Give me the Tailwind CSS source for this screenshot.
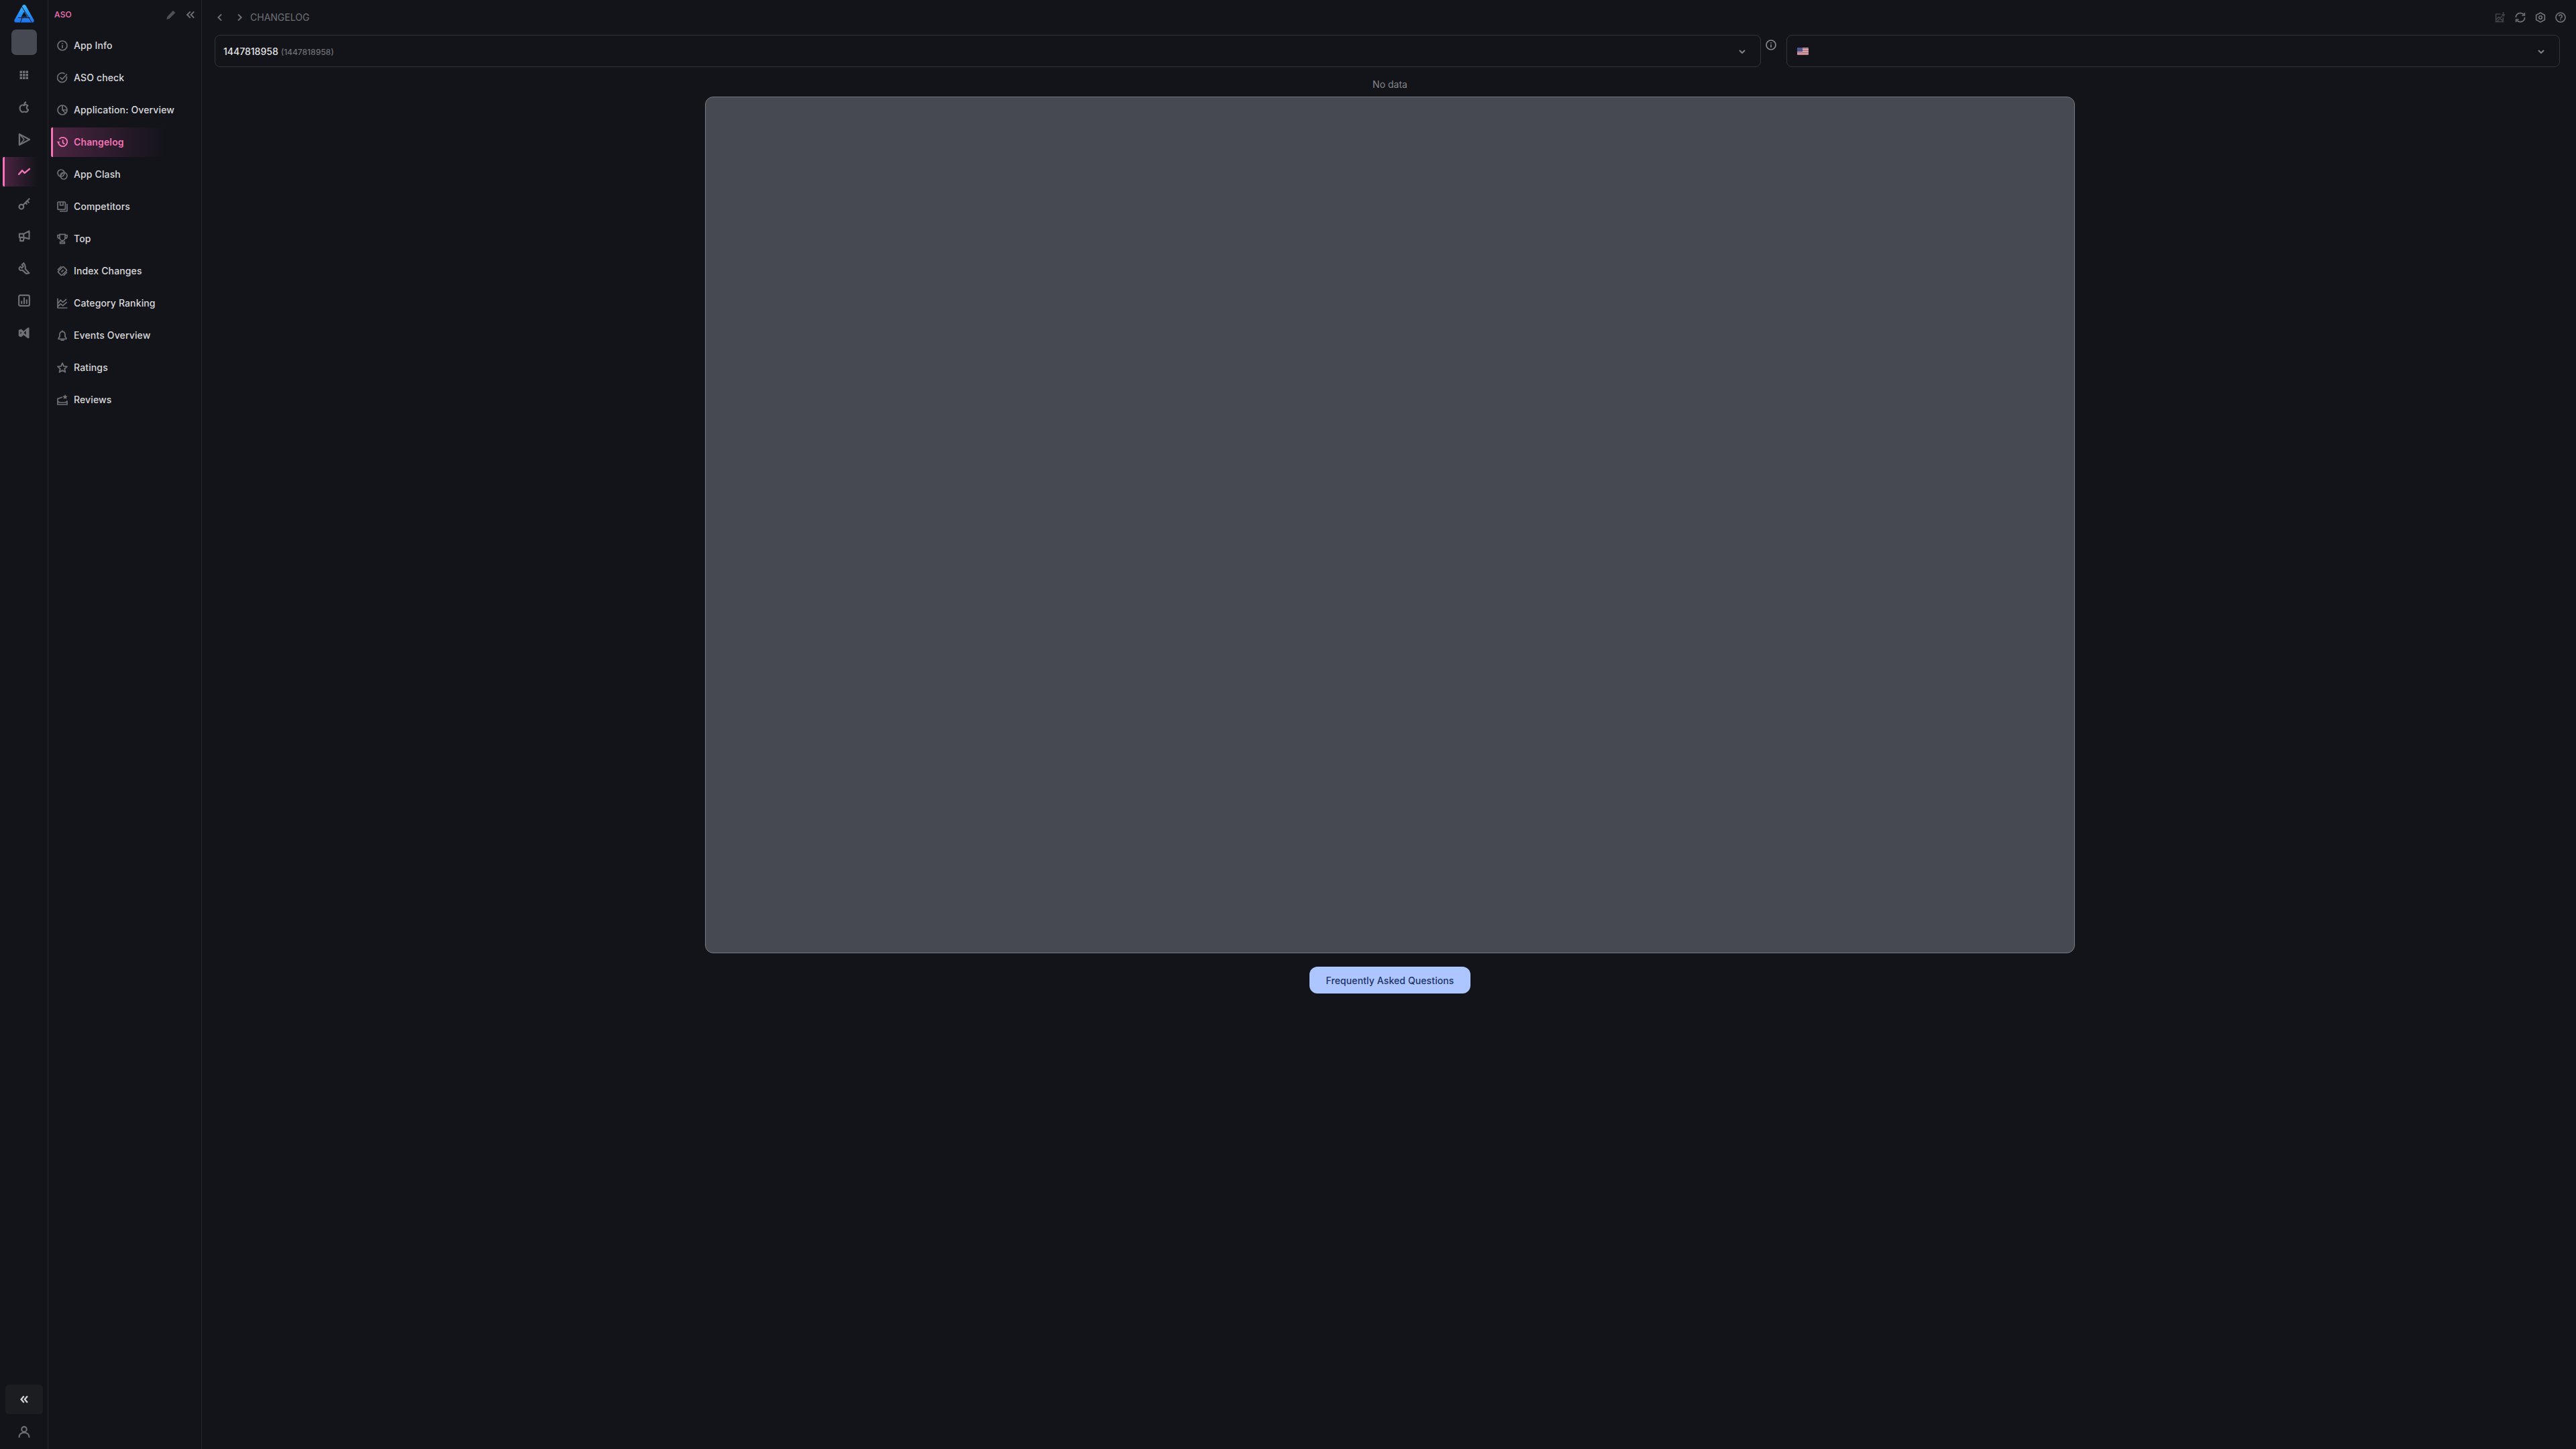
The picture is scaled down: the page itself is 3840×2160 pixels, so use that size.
<!DOCTYPE html>
<html lang="en">
<head>
    <meta charset="UTF-8">
    <title>Changelog</title>
    <script src="https://cdn.jsdelivr.net/npm/@tailwindcss/browser@4"></script>
</head>
<body class="bg-[#13141a] font-['Inter',sans-serif] text-[#e4e4e7]">
<div class="flex h-[2160px] w-[3840px] overflow-hidden">

    <!-- icon rail -->
    <aside class="flex h-full w-[72px] shrink-0 flex-col items-center border-r border-[#26272c]">
        <svg class="mt-[7px] h-[27px] w-[30px]" viewBox="0 0 30 27">
            <defs>
                <linearGradient id="logoGrad" x1="0" y1="0" x2="0" y2="1">
                    <stop offset="0" stop-color="#35b4fb"/>
                    <stop offset="1" stop-color="#1b72ee"/>
                </linearGradient>
            </defs>
            <path fill="url(#logoGrad)" fill-rule="evenodd" d="M15 0c1.200 0 2 .6 2.600 1.600L29.400 22.500c1 1.900-.1 4-2.400 4H3c-2.200 0-3.400-2.100-2.400-4L12.400 1.600C13 .6 13.800 0 15 0Zm0 10.500-4.700 8h9.400l-4.700-8Z"/>
            <path d="M11.500 3 26 26M6 19.500h18M9.500 26.500l2.500-7" fill="none" stroke="#13141a" stroke-width="1"/>
        </svg>
        <div class="mt-[10px] h-[38px] w-[38px] rounded-[7px] bg-[#464952]"></div>

        <div class="mt-[6px] flex w-full flex-col items-center text-[#6f7076]">
            <div class="flex h-[48px] w-full items-center justify-center">
                <svg class="h-[16px] w-[16px]" viewBox="0 0 16 16" fill="currentColor"><rect x="1.500" y="1.500" width="3.500" height="3.500" rx=".5"/><rect x="6" y="1.500" width="3.500" height="3.500" rx=".5"/><rect x="10.500" y="1.500" width="3.500" height="3.500" rx=".5"/><rect x="1.500" y="6" width="3.500" height="3.500" rx=".5"/><rect x="6" y="6" width="3.500" height="3.500" rx=".5"/><rect x="10.500" y="6" width="3.500" height="3.500" rx=".5"/><rect x="1.500" y="10.500" width="3.500" height="3.500" rx=".5"/><rect x="6" y="10.500" width="3.500" height="3.500" rx=".5"/><rect x="10.500" y="10.500" width="3.500" height="3.500" rx=".5"/></svg>
            </div>
            <div class="flex h-[48px] w-full items-center justify-center">
                <svg class="h-[18px] w-[18px]" viewBox="0 0 24 24" fill="none" stroke="currentColor" stroke-width="2.800" stroke-linejoin="round"><path d="M12 8.500c-1.500-1-3.600-1.400-5.200-.6C4.800 9 3.500 11 3.500 13.500c0 3.700 2.400 8 5 8 1.300 0 2.200-.8 3.500-.8s2.200.8 3.500.8c1.900 0 3.800-2.300 4.700-4.500-2.100-1-3.200-2.500-3.200-4.500 0-1.600.8-3 2.200-3.800-1-1.200-2.700-2-4.300-2-1.200 0-2.200.4-3.200 1Z"/><path d="M12.500 6.500c0-2.500.8-4 3.500-5" stroke-width="3.200"/></svg>
            </div>
            <div class="flex h-[48px] w-full items-center justify-center">
                <svg class="h-[20px] w-[20px]" viewBox="0 0 24 24" fill="none" stroke="currentColor" stroke-width="2.800" stroke-linejoin="round"><path d="M3.500 2.500v19L21.500 12 3.500 2.500Z"/><path d="M3.500 21.500 12 12 3.500 2.500" stroke-width="1.800"/></svg>
            </div>
            <div class="relative my-[2px] flex h-[44px] w-full items-center justify-center">
                <div class="absolute left-[4px] top-0 h-[44px] w-[52px] rounded-l-[2px] border-l-[3px] border-[#f472b6] bg-gradient-to-r from-[#4a2440] to-transparent"></div>
                <svg class="relative h-[18px] w-[18px] text-[#f472b6]" viewBox="0 0 24 24" fill="none" stroke="currentColor" stroke-width="3.200" stroke-linecap="round" stroke-linejoin="round"><path d="M1.500 17 8 9.500l5 5 9.500-8"/></svg>
            </div>
            <div class="flex h-[48px] w-full items-center justify-center">
                <svg class="h-[18px] w-[18px]" viewBox="0 0 24 24" fill="none" stroke="currentColor" stroke-width="3" stroke-linecap="round"><circle cx="6.500" cy="17.500" r="4.500"/><path d="m10 14 12-12M18 6l3 3M14.500 9.500l2.500 2.500"/></svg>
            </div>
            <div class="flex h-[48px] w-full items-center justify-center">
                <svg class="h-[18px] w-[18px]" viewBox="0 0 24 24" fill="none" stroke="currentColor" stroke-width="2.800" stroke-linejoin="round"><path d="M22 2v15.500L11 14.500H2.500V7.500H11L22 2Z"/><path d="M4.500 14.500 4 21.500h6.500l1-7M11 7.500v7"/></svg>
            </div>
            <div class="flex h-[48px] w-full items-center justify-center">
                <svg class="h-[18px] w-[18px]" viewBox="0 0 24 24" fill="none" stroke="currentColor" stroke-width="2.800" stroke-linejoin="round" stroke-linecap="round"><path d="M11 1.500 7.500 5l3 3-3 3.500-3-3-2.500 3C2 15 5 17 8.500 15.500L16 22.500l6-1-8-8.500c1-3 .5-5.500-1-8.500L11 1.500Z"/></svg>
            </div>
            <div class="flex h-[48px] w-full items-center justify-center">
                <svg class="h-[18px] w-[18px]" viewBox="0 0 24 24" fill="none" stroke="currentColor" stroke-width="2.800"><rect x="1.500" y="1.500" width="21" height="21" rx="2.500"/><path d="M7 18.500v-6M12 18.500V6M17 18.500V10"/></svg>
            </div>
            <div class="flex h-[48px] w-full items-center justify-center">
                <svg class="h-[18px] w-[18px]" viewBox="0 0 24 24" fill="currentColor"><path d="M22 1.500v21l-3 .5-8-6.500-5 4-5-2V6.500l5-2 5 4 8-6.500 3-.5ZM15.500 8 11.500 12l4 4V8ZM4.500 9.500v5L7 12 4.500 9.500Z"/></svg>
            </div>
        </div>

        <div class="mt-auto flex h-[44px] w-[56px] items-center justify-center rounded-[6px] bg-[#1c1d21] text-[#d4d4d8]">
            <svg class="h-[14px] w-[14px]" viewBox="0 0 24 24" fill="none" stroke="currentColor" stroke-width="4"><path d="m11.500 4-7 8 7 8M20.500 4l-7 8 7 8"/></svg>
        </div>
        <div class="mt-[6px] mb-[6px] flex h-[40px] w-full items-center justify-center text-[#6f7076]">
            <svg class="h-[18px] w-[18px]" viewBox="0 0 24 24" fill="none" stroke="currentColor" stroke-width="2.800" stroke-linecap="round"><circle cx="12" cy="7.500" r="5"/><path d="M2 23c0-5.500 4.500-9 10-9s10 3.500 10 9"/></svg>
        </div>
    </aside>

    <!-- section menu -->
    <nav class="flex h-full w-[229px] shrink-0 flex-col border-r border-[#26272c]">
        <div class="flex h-[44px] items-center pl-[9px] pr-[9px]">
            <span class="text-[12px] font-medium tracking-[0.2px] text-[#f472b6]">ASO</span>
            <svg class="ml-auto h-[16px] w-[16px] text-[#4f5056]" viewBox="0 0 24 24" fill="currentColor"><path d="M16.500 2.500 21.500 7.500 8 21l-6 1.500L3.500 16.500 16.500 2.500Z"/></svg>
            <svg class="ml-[14px] h-[14px] w-[14px] text-[#6f7076]" viewBox="0 0 24 24" fill="none" stroke="currentColor" stroke-width="3.400"><path d="m11.500 4-8 8 8 8M21 4l-8 8 8 8"/></svg>
        </div>

        <ul class="flex flex-col text-[14px] font-medium leading-[20px] tracking-[0.14px] text-[#d9d9dc]">
            <li class="flex h-[48px] items-center gap-[9px] pl-[13px]">
                <svg class="h-[16px] w-[16px] text-[#6f7076]" viewBox="0 0 24 24" fill="none" stroke="currentColor" stroke-width="2.600"><circle cx="12" cy="12" r="10.500"/><path d="M12 11v6.500M12 6.500v2.200"/></svg>
                <span>App Info</span>
            </li>
            <li class="flex h-[48px] items-center gap-[9px] pl-[13px]">
                <svg class="h-[16px] w-[16px] text-[#6f7076]" viewBox="0 0 24 24" fill="none" stroke="currentColor" stroke-width="2.600" stroke-linecap="round"><path d="M21.500 9.500A10.500 10.500 0 1 1 16.500 2.500"/><path d="m7.500 11.500 4 4 10-11"/></svg>
                <span>ASO check</span>
            </li>
            <li class="flex h-[48px] items-center gap-[9px] pl-[13px]">
                <svg class="h-[16px] w-[16px] text-[#6f7076]" viewBox="0 0 24 24" fill="none" stroke="currentColor" stroke-width="2.600"><circle cx="12" cy="12" r="10.500"/><path d="M12 1.500V12h10.500M12 12l7.500 7.500"/></svg>
                <span>Application: Overview</span>
            </li>
            <li class="relative my-[2px] flex h-[44px] items-center gap-[9px] pl-[13px] font-semibold text-[#f472b6]">
                <div class="absolute inset-y-0 left-[4px] w-[170px] rounded-l-[2px] border-l-[3px] border-[#f472b6] bg-gradient-to-r from-[#4a2440] to-transparent"></div>
                <svg class="relative h-[16px] w-[16px]" viewBox="0 0 24 24" fill="none" stroke="currentColor" stroke-width="2.800"><path d="M5 5A10 10 0 1 1 3 13"/><path d="M13 6.500V13l4 3"/><path d="M-.5 10.500h7.500L3.200 15-.5 10.500Z" fill="currentColor" stroke="none"/></svg>
                <span class="relative">Changelog</span>
            </li>
            <li class="flex h-[48px] items-center gap-[9px] pl-[13px]">
                <svg class="h-[16px] w-[16px] text-[#6f7076]" viewBox="0 0 24 24" fill="none" stroke="currentColor" stroke-width="2.600"><circle cx="9" cy="9" r="7.500"/><circle cx="15" cy="15" r="7.500"/><path d="M9.500 14.500c-.5-2.500 2.500-5.500 5-5" stroke-width="2"/></svg>
                <span>App Clash</span>
            </li>
            <li class="flex h-[48px] items-center gap-[9px] pl-[13px]">
                <svg class="h-[16px] w-[16px] text-[#6f7076]" viewBox="0 0 24 24" fill="none" stroke="currentColor" stroke-width="2.600"><rect x="1.500" y="1.500" width="17" height="17" rx="1.500"/><path d="M22.500 6v15a1.500 1.500 0 0 1-1.500 1.500H6M7 1.500v7.500h6.500V1.500"/></svg>
                <span>Competitors</span>
            </li>
            <li class="flex h-[48px] items-center gap-[9px] pl-[13px]">
                <svg class="h-[16px] w-[16px] text-[#6f7076]" viewBox="0 0 24 24" fill="none" stroke="currentColor" stroke-width="2.600"><path d="M6 2h12v8a6 6 0 0 1-12 0V2ZM6 4H1.500v3c0 2.500 1.500 4 4.500 4M18 4h4.500v3c0 2.500-1.500 4-4.500 4M12 16v3M7 22.500h10V19H7z"/></svg>
                <span>Top</span>
            </li>
            <li class="flex h-[48px] items-center gap-[9px] pl-[13px]">
                <svg class="h-[16px] w-[16px] text-[#6f7076]" viewBox="0 0 24 24" fill="none" stroke="currentColor" stroke-width="2.600"><rect x="6" y="3.500" width="12" height="17" rx="2" transform="rotate(45 12 12)"/><path d="m1.500 9.500 8-8M14.500 22.500l8-8M9.500 14.500l5-5"/></svg>
                <span>Index Changes</span>
            </li>
            <li class="flex h-[48px] items-center gap-[9px] pl-[13px]">
                <svg class="h-[16px] w-[16px] text-[#6f7076]" viewBox="0 0 24 24" fill="none" stroke="currentColor" stroke-width="2.600"><path d="M1.500 1v21.500H23"/><path d="m1.500 13 6.500-8 5 5 8-7M1.500 19.500l6.500-6 5 4 9-8"/></svg>
                <span>Category Ranking</span>
            </li>
            <li class="flex h-[48px] items-center gap-[9px] pl-[13px]">
                <svg class="h-[16px] w-[16px] text-[#6f7076]" viewBox="0 0 24 24" fill="none" stroke="currentColor" stroke-width="2.800" stroke-linejoin="round"><path d="M12 3.500c-4 0-6 3-6 7v4L3.500 18v2h17v-2L18 14.500v-4c0-4-2-7-6-7Z"/><path d="M12 .8v2M8 22.800h8" stroke-width="3"/></svg>
                <span>Events Overview</span>
            </li>
            <li class="flex h-[48px] items-center gap-[9px] pl-[13px]">
                <svg class="h-[16px] w-[16px] text-[#6f7076]" viewBox="0 0 24 24" fill="none" stroke="currentColor" stroke-width="2.800" stroke-linejoin="round"><path d="m12 2 3 6.800 7.500.8-5.600 5 1.600 7.400L12 18.200 5.500 22l1.600-7.400-5.600-5 7.500-.8L12 2Z"/></svg>
                <span>Ratings</span>
            </li>
            <li class="flex h-[48px] items-center gap-[9px] pl-[13px]">
                <svg class="h-[16px] w-[16px] text-[#6f7076]" viewBox="0 0 24 24" fill="none" stroke="currentColor" stroke-width="2.600"><path d="M12 6 1.500 9.500v13h21V14M1.500 15.500l4 2.500h13l4-2.500"/><path d="m18 0 1.800 3.400 3.700.5-2.700 2.600.7 3.700L18 8.500l-3.500 1.700.7-3.700-2.700-2.600 3.700-.5L18 0Z" fill="currentColor" stroke="none"/></svg>
                <span>Reviews</span>
            </li>
        </ul>
    </nav>

    <!-- main -->
    <main class="flex min-w-0 flex-1 flex-col">
        <div class="flex h-[52px] shrink-0 items-center pl-[20px] pr-[15px] text-[#6f7076]">
            <svg class="h-[14px] w-[14px]" viewBox="0 0 24 24" fill="none" stroke="currentColor" stroke-width="3.400"><path d="m15.500 4-8 8 8 8"/></svg>
            <svg class="ml-[15px] h-[14px] w-[14px]" viewBox="0 0 24 24" fill="none" stroke="currentColor" stroke-width="3.400"><path d="m8.500 4 8 8-8 8"/></svg>
            <span class="ml-[9px] text-[14px] leading-[20px]">CHANGELOG</span>
            <div class="ml-auto flex items-center gap-[14px]">
                <svg class="h-[16px] w-[16px] text-[#404146]" viewBox="0 0 24 24" fill="none" stroke="currentColor" stroke-width="2.600"><path d="M13 4.500H2.500v17h16V12M2.500 17l6-6 10 9M5 21 16 9"/><path d="M19 0v8M15.500 5l3.500 3.500L22.500 5"/></svg>
                <svg class="h-[16px] w-[16px]" viewBox="0 0 24 24" fill="none" stroke="currentColor" stroke-width="2.600"><path d="M2 12A10 10 0 0 1 19.500 5.500M22 12A10 10 0 0 1 4.500 18.500"/><path d="M21.500 1.500v6h-6M2.500 22.500v-6h6"/></svg>
                <svg class="h-[16px] w-[16px]" viewBox="0 0 24 24" fill="none" stroke="currentColor" stroke-width="2.600" stroke-linejoin="round"><path d="m12 1.500 9.500 5.300v10.400L12 22.500l-9.500-5.300V6.800L12 1.500Z"/><circle cx="12" cy="12" r="3.500"/></svg>
                <svg class="h-[16px] w-[16px]" viewBox="0 0 24 24" fill="none" stroke="currentColor" stroke-width="2.600"><circle cx="12" cy="12" r="10.500"/><path d="M8.800 9.500a3.200 3.200 0 1 1 4.500 2.900c-.9.400-1.300 1-1.300 2.100M12 16v2.200"/></svg>
            </div>
        </div>

        <div class="flex shrink-0 items-start pl-[19px] pr-[24px]">
            <div class="flex h-[48px] w-[2305px] items-center justify-between rounded-[8px] border border-[#33343a] pl-[12px] pr-[21px]">
                <div class="flex items-baseline gap-[4px]">
                    <span class="text-[14px] font-medium text-[#e4e4e7]">1447818958</span>
                    <span class="text-[12px] font-medium text-[#6f7076]">(1447818958)</span>
                </div>
                <svg class="mt-[2px] h-[12px] w-[12px] text-[#85868b]" viewBox="0 0 24 24" fill="none" stroke="currentColor" stroke-width="3.800"><path d="m4 8 8 8 8-8"/></svg>
            </div>
            <svg class="mr-[15px] ml-[7px] mt-[7px] h-[16px] w-[16px] shrink-0 text-[#85868b]" viewBox="0 0 24 24" fill="none" stroke="currentColor" stroke-width="2.600"><circle cx="12" cy="12" r="10.500"/><path d="M12 11v6.500M12 6.500v2.200"/></svg>
            <div class="flex h-[48px] flex-1 items-center justify-between rounded-[8px] border border-[#33343a] pl-[15px] pr-[21px]">
                <svg class="mt-[1px] h-[11px] w-[17px]" viewBox="0 0 17 11">
                    <rect width="17" height="11" rx="1" fill="#cdaab0"/>
                    <path d="M0 1.500h17M0 4.500h17M0 7.500h17M0 10h17" stroke="#b5606c" stroke-width="1"/>
                    <rect width="8" height="6" fill="#4f5590"/>
                </svg>
                <svg class="mt-[2px] h-[12px] w-[12px] text-[#85868b]" viewBox="0 0 24 24" fill="none" stroke="currentColor" stroke-width="3.800"><path d="m4 8 8 8 8-8"/></svg>
            </div>
        </div>

        <div class="flex flex-col items-center pl-[3px]">
            <p class="mt-[16px] h-[20px] text-[14px] leading-[20px] text-[#85868b]">No data</p>
            <div class="mt-[8px] h-[1277px] w-[2042px] rounded-[12px] border border-[#777982] bg-[#464952]"></div>
            <button class="mt-[20px] flex h-[40px] w-[240px] items-center justify-center rounded-[12px] bg-[#aec6ff] text-[14px] font-medium tracking-[0.1px] text-[#1c3264]">Frequently Asked Questions</button>
        </div>
    </main>
</div>
</body>
</html>
